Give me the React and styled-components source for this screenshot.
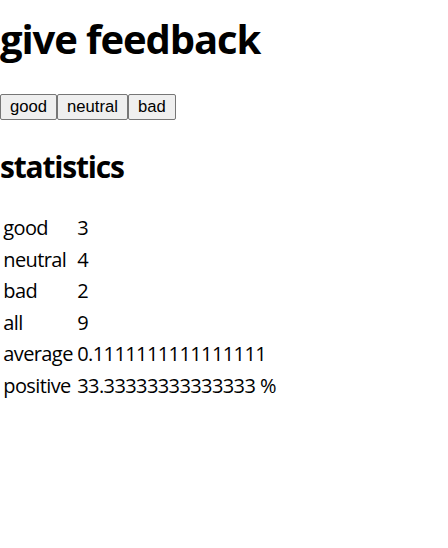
import React from "react";
import styled, { createGlobalStyle } from "styled-components";

const Global = createGlobalStyle`
  body {
    margin: 0;
    font-family: "Open Sans", "Noto Sans", sans-serif;
    font-size: 20px;
    line-height: 1.33;
    color: #000;
    background: #fff;
  }
`;

const Title = styled.h1`
  font-size: 40px;
  font-weight: 700;
  margin: 12px 0 29px;
  letter-spacing: -1.1px;
`;

const Buttons = styled.div`
  display: flex;
`;

const Button = styled.button`
  font-family: "Liberation Sans", Arial, sans-serif;
  font-size: 16.67px;
  height: 26px;
  padding: 0 9px;
  background: #efefef;
  border: 1px solid #767676;
  border-radius: 2px;
  color: #000;
`;

const Subtitle = styled.h2`
  font-size: 30px;
  font-weight: 700;
  margin: 27px 0 24px;
  letter-spacing: -1.2px;
`;

const Table = styled.table`
  border-spacing: 2.5px;
  font-size: 20px;
  line-height: 27px;
  letter-spacing: -0.6px;
`;

const Cell = styled.td`
  padding: 1.25px;
  white-space: nowrap;
`;

const stats = [
  ["good", 3],
  ["neutral", 4],
  ["bad", 2],
  ["all", 9],
  ["average", 0.1111111111111111],
  ["positive", "33.33333333333333 %"],
];

export default function App() {
  return (
    <>
      <Global />
      <Title>give feedback</Title>
      <Buttons>
        <Button>good</Button>
        <Button>neutral</Button>
        <Button>bad</Button>
      </Buttons>
      <Subtitle>statistics</Subtitle>
      <Table>
        <tbody>
          {stats.map(([name, value]) => (
            <tr key={name}>
              <Cell>{name}</Cell>
              <Cell>{value}</Cell>
            </tr>
          ))}
        </tbody>
      </Table>
    </>
  );
}
